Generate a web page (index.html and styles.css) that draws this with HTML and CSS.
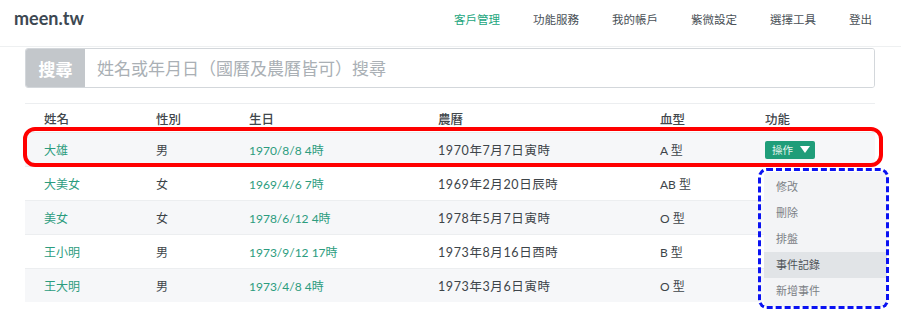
FILE: index.html
```html
<!DOCTYPE html>
<html lang="zh-Hant">
<head>
    <meta charset="UTF-8">
    <meta name="viewport" content="width=device-width, initial-scale=1.0">
    <title>meen.tw 客戶管理</title>
    <link rel="stylesheet" href="styles.css">
</head>
<body>
    <nav class="navbar">
        <a class="brand" href="#">meen.tw</a>
        <ul class="nav-links">
            <li><a class="active" href="#">客戶管理</a></li>
            <li><a href="#">功能服務</a></li>
            <li><a href="#">我的帳戶</a></li>
            <li><a href="#">紫微設定</a></li>
            <li><a href="#">選擇工具</a></li>
            <li><a href="#">登出</a></li>
        </ul>
    </nav>

    <div class="main">
        <div class="search-group">
            <span class="search-addon">搜尋</span>
            <input type="text" class="search-input" placeholder="姓名或年月日（國曆及農曆皆可）搜尋">
        </div>

        <div class="table-wrap">
            <table class="client-table">
                <colgroup>
                    <col class="col-name">
                    <col class="col-gender">
                    <col class="col-birth">
                    <col class="col-lunar">
                    <col class="col-blood">
                    <col class="col-action">
                </colgroup>
                <thead>
                    <tr>
                        <th>姓名</th>
                        <th>性別</th>
                        <th>生日</th>
                        <th>農曆</th>
                        <th>血型</th>
                        <th>功能</th>
                    </tr>
                </thead>
                <tbody>
                    <tr>
                        <td class="link">大雄</td>
                        <td>男</td>
                        <td class="link">1970/8/8 4時</td>
                        <td class="lunar">1970年7月7日寅時</td>
                        <td>A 型</td>
                        <td>
                            <div class="action">
                                <button class="action-btn">操作 <span class="caret"></span></button>
                            </div>
                        </td>
                    </tr>
                    <tr>
                        <td class="link">大美女</td>
                        <td>女</td>
                        <td class="link">1969/4/6 7時</td>
                        <td class="lunar">1969年2月20日辰時</td>
                        <td>AB 型</td>
                        <td></td>
                    </tr>
                    <tr>
                        <td class="link">美女</td>
                        <td>女</td>
                        <td class="link">1978/6/12 4時</td>
                        <td class="lunar">1978年5月7日寅時</td>
                        <td>O 型</td>
                        <td></td>
                    </tr>
                    <tr>
                        <td class="link">王小明</td>
                        <td>男</td>
                        <td class="link">1973/9/12 17時</td>
                        <td class="lunar">1973年8月16日酉時</td>
                        <td>B 型</td>
                        <td></td>
                    </tr>
                    <tr>
                        <td class="link">王大明</td>
                        <td>男</td>
                        <td class="link">1973/4/8 4時</td>
                        <td class="lunar">1973年3月6日寅時</td>
                        <td>O 型</td>
                        <td></td>
                    </tr>
                </tbody>
            </table>
            <div class="row-mark"></div>
            <ul class="dropdown">
                <li>修改</li>
                <li>刪除</li>
                <li>排盤</li>
                <li class="hover">事件記錄</li>
                <li>新增事件</li>
            </ul>
        </div>
    </div>
    <div class="spacer"></div>
</body>
</html>
```

FILE: styles.css
```css
body {
    margin: 0;
    font-family: Lato, "Noto Sans CJK TC", sans-serif;
    color: #3d4449;
    background: #fff;
}

a {
    text-decoration: none;
}

/* top bar */
.navbar {
    display: flex;
    justify-content: space-between;
    align-items: center;
    height: 46px;
    padding: 0 29px 0 14px;
    border-bottom: 1px solid #eef0f1;
}

.brand {
    font-size: 18px;
    font-weight: 700;
    color: #3d4852;
    margin-top: -11px;
}

.nav-links {
    display: flex;
    gap: 33px;
    list-style: none;
    margin: -12px 0 0 0;
    padding: 0;
}

.nav-links a {
    font-size: 11.5px;
    color: #4a5157;
}

.nav-links a.active {
    color: #22a67d;
}

.main {
    padding: 1px 26px 0 25px;
}

/* search */
.search-group {
    display: flex;
    height: 40px;
    box-sizing: border-box;
    border: 1px solid #d3d7db;
    border-radius: 3px;
    overflow: hidden;
}

.search-addon {
    display: flex;
    align-items: center;
    justify-content: center;
    width: 59px;
    background: #c3c7cb;
    color: #fff;
    font-size: 17px;
    font-weight: 700;
}

.search-input {
    flex: 1;
    border: none;
    outline: none;
    padding: 0 12px;
    font-family: Lato, "Noto Sans CJK TC", sans-serif;
    font-size: 17px;
    color: #3d4449;
}

.search-input::placeholder {
    color: #aab0b5;
}

/* table */
.table-wrap {
    position: relative;
    margin-top: 15px;
}

.client-table {
    width: 100%;
    border-collapse: collapse;
    table-layout: fixed;
    border-top: 1px solid #eceef0;
    font-size: 12px;
}

.col-name { width: 112px; }
.col-gender { width: 93px; }
.col-birth { width: 189px; }
.col-lunar { width: 222px; }
.col-blood { width: 105px; }

.client-table th {
    height: 28px;
    padding: 0 0 0 19px;
    text-align: left;
    font-size: 12.5px;
    font-weight: 500;
    color: #41474c;
}

.client-table td {
    height: 33px;
    padding: 0 0 0 19px;
    border-top: 1px solid #eceef0;
    color: #3d4449;
}

.client-table td.lunar {
    font-size: 12.5px;
    letter-spacing: 0.6px;
}

.client-table tbody tr:nth-child(odd) td {
    background: #f6f7f9;
}

.client-table td.link {
    color: #2c9c7e;
}

/* action button + menu */
.action {
    display: inline-block;
    vertical-align: middle;
}

.action-btn {
    display: flex;
    align-items: center;
    gap: 7px;
    height: 18px;
    padding: 0 5px 0 7px;
    border: none;
    border-radius: 2px;
    background: #1f9d79;
    color: #e6f5ef;
    font-family: Lato, "Noto Sans CJK TC", sans-serif;
    font-size: 10.5px;
    cursor: pointer;
}

.caret {
    width: 0;
    height: 0;
    border-left: 5px solid transparent;
    border-right: 5px solid transparent;
    border-top: 7px solid #fff;
}

/* open menu, placed under the button of the first row */
.dropdown {
    position: absolute;
    top: 69px;
    left: 739px;
    width: 123px;
    margin: 0;
    padding: 2px 0 3px 0;
    list-style: none;
    background: #f3f4f6;
    border-radius: 4px;
    z-index: 2;
}

.dropdown::after {
    content: "";
    position: absolute;
    top: -4px;
    left: -6px;
    right: -2px;
    bottom: -2px;
    border: 3px dashed #0a12f2;
    border-radius: 9px;
}

.dropdown li {
    height: 26px;
    line-height: 26px;
    padding-left: 12px;
    font-size: 11px;
    color: #7b8085;
}

.dropdown li.hover {
    background: #e1e4e7;
    color: #4d5358;
}

/* annotation around the selected row */
.row-mark {
    position: absolute;
    top: 24px;
    left: -2px;
    width: 860px;
    height: 40px;
    box-sizing: border-box;
    border: 4px solid #ff0000;
    border-radius: 12px;
    pointer-events: none;
}

.spacer {
    height: 20px;
}
```
